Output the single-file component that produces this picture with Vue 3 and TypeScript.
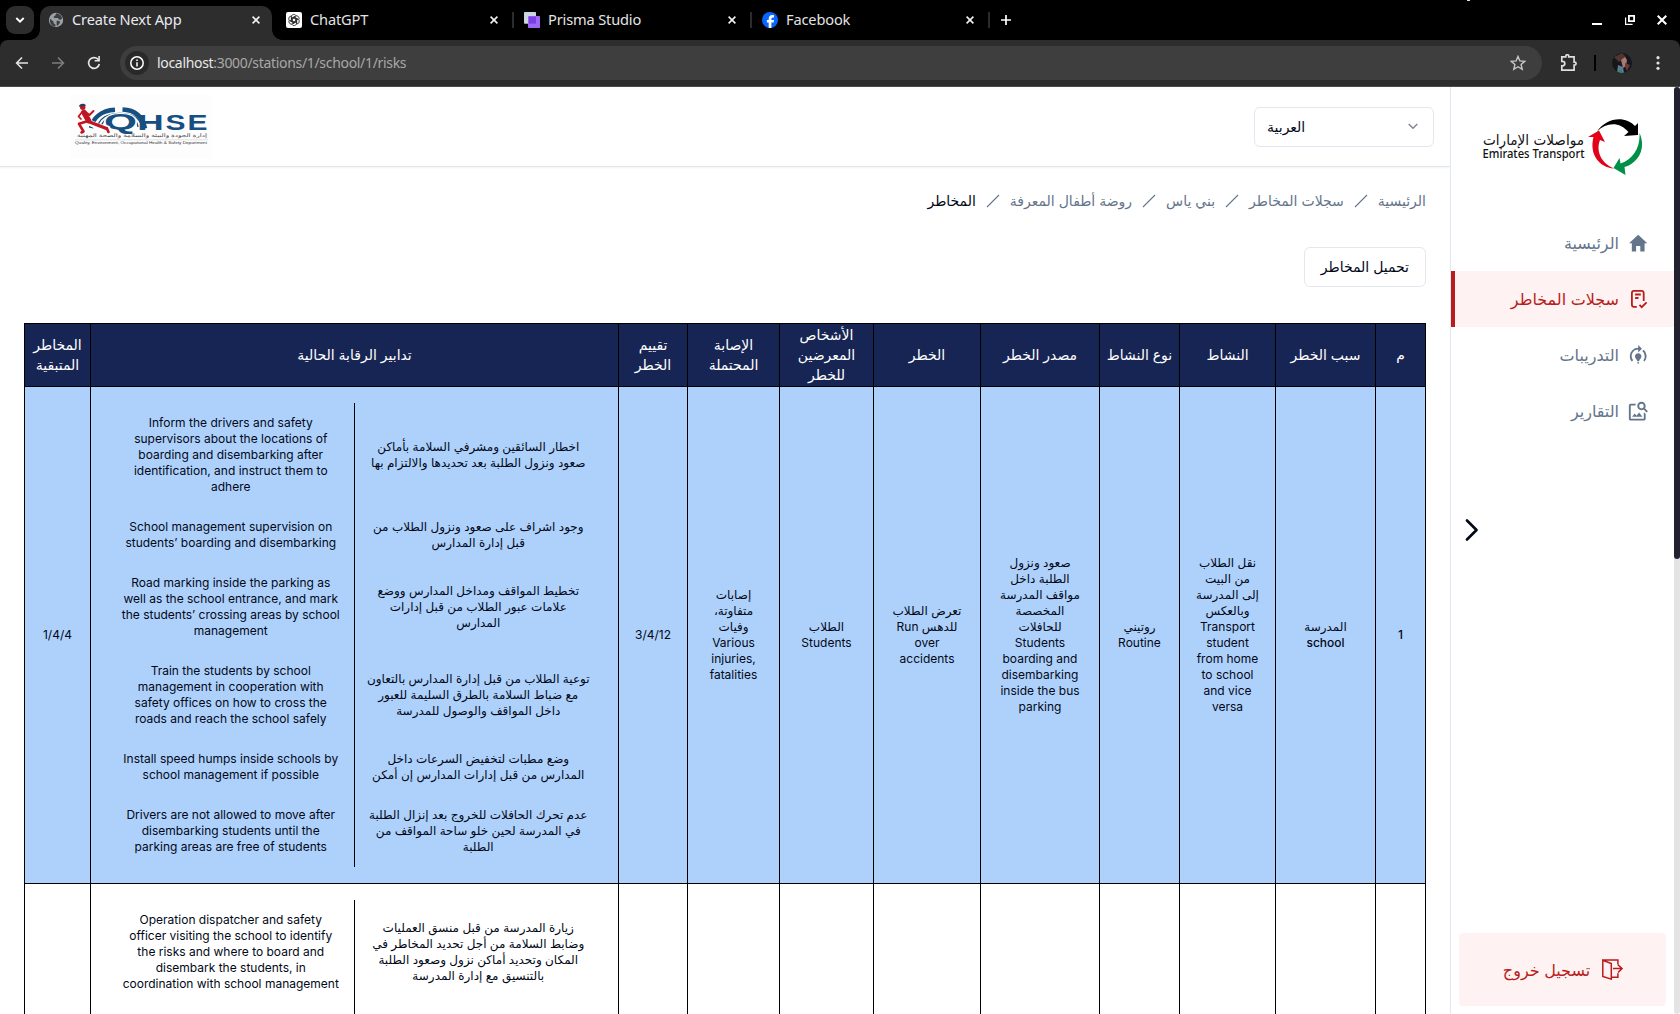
<script setup lang="ts">
interface Tab {
  title: string
  icon: 'globe' | 'gpt' | 'prisma' | 'facebook'
  active?: boolean
}

interface Column {
  label: string
  width: number
  text?: string
  strong?: boolean
}

interface Control {
  ar: string
  en: string
}

const tabs: Tab[] = [
  { title: 'Create Next App', icon: 'globe', active: true },
  { title: 'ChatGPT', icon: 'gpt' },
  { title: 'Prisma Studio', icon: 'prisma' },
  { title: 'Facebook', icon: 'facebook' },
]

const crumbs = ['الرئيسية', 'سجلات المخاطر', 'بني ياس', 'روضة أطفال المعرفة', 'المخاطر']

const navItems = [
  { label: 'الرئيسية', icon: 'home' },
  { label: 'سجلات المخاطر', icon: 'records', active: true },
  { label: 'التدريبات', icon: 'training' },
  { label: 'التقارير', icon: 'reports' },
]

const columns: Column[] = [
  { label: 'م', width: 50, text: '1', strong: true },
  { label: 'سبب الخطر', width: 100, text: 'المدرسة\nschool', strong: true },
  { label: 'النشاط', width: 96, text: 'نقل الطلاب\nمن البيت\nإلى المدرسة\nوبالعكس\nTransport\nstudent\nfrom home\nto school\nand vice\nversa' },
  { label: 'نوع النشاط', width: 80, text: 'روتيني\nRoutine' },
  { label: 'مصدر الخطر', width: 119, text: 'صعود ونزول\nالطلبة داخل\nمواقف المدرسة\nالمخصصة\nللحافلات\nStudents\nboarding and\ndisembarking\ninside the bus\nparking' },
  { label: 'الخطر', width: 107, text: 'تعرض الطلاب\nللدهس Run\nover\naccidents' },
  { label: 'الأشخاص\nالمعرضين\nللخطر', width: 94, text: 'الطلاب\nStudents' },
  { label: 'الإصابة\nالمحتملة', width: 92, text: 'إصابات\nمتفاوتة،\nوفيات\nVarious\ninjuries,\u200e\nfatalities' },
  { label: 'تقييم\nالخطر', width: 69, text: '3/4/12' },
  { label: 'تدابير الرقابة الحالية', width: 528 },
  { label: 'المخاطر\nالمتبقية', width: 66, text: '1/4/4' },
]

const controls: Control[] = [
  {
    ar: 'اخطار السائقين ومشرفي السلامة بأماكن\nصعود ونزول الطلبة بعد تحديدها والالتزام بها',
    en: 'Inform the drivers and safety\nsupervisors about the locations of\nboarding and disembarking after\nidentification, and instruct them to\nadhere',
  },
  {
    ar: 'وجود اشراف على صعود ونزول الطلاب من\nقبل إدارة المدارس',
    en: 'School management supervision on\nstudents’ boarding and disembarking',
  },
  {
    ar: 'تخطيط المواقف ومداخل المدارس ووضع\nعلامات عبور الطلاب من قبل إدارات\nالمدارس',
    en: 'Road marking inside the parking as\nwell as the school entrance, and mark\nthe students’ crossing areas by school\nmanagement',
  },
  {
    ar: 'توعية الطلاب من قبل إدارة المدارس بالتعاون\nمع ضباط السلامة بالطرق السليمة للعبور\nداخل المواقف والوصول للمدرسة',
    en: 'Train the students by school\nmanagement in cooperation with\nsafety offices on how to cross the\nroads and reach the school safely',
  },
  {
    ar: 'وضع مطبات لتخفيض السرعات داخل\nالمدارس من قبل إدارات المدارس إن أمكن',
    en: 'Install speed humps inside schools by\nschool management if possible',
  },
  {
    ar: 'عدم تحرك الحافلات للخروج بعد إنزال الطلبة\nفي المدرسة لحين خلو ساحة المواقف من\nالطلبة',
    en: 'Drivers are not allowed to move after\ndisembarking students until the\nparking areas are free of students',
  },
]

const nextControls: Control[] = [
  {
    ar: 'زيارة المدرسة من قبل منسق العمليات\nوضابط السلامة من أجل تحديد المخاطر في\nالمكان وتحديد أماكن نزول وصعود الطلبة\nبالتنسيق مع إدارة المدرسة',
    en: 'Operation dispatcher and safety\nofficer visiting the school to identify\nthe risks and where to board and\ndisembark the students, in\ncoordination with school management',
  },
]
</script>

<template>
  <div class="window">
    <header class="tabstrip">
      <button class="tab-search">
        <svg width="10" height="6" viewBox="0 0 10 6"><path d="M1.3 1l3.7 3.6L8.7 1" fill="none" stroke="#fff" stroke-width="1.9" /></svg>
      </button>
      <div v-for="tab in tabs" :key="tab.title" class="tab" :class="{ active: tab.active }">
        <svg v-if="tab.icon === 'globe'" class="favicon" width="16" height="16" viewBox="0 0 16 16">
          <circle cx="8" cy="8" r="7.200" fill="#9aa0a6" />
          <path d="M2 6.800l3.600 2.900v1.500l1.800 1.200v2.400C4 14.400 1.300 11.500 2 6.800zM8.200 1.200L7.500 3.300 5.800 4.500v1.300l1.800.2h2.200l1.300 1.600 1.300.2 1.700-1.200C14 4 11.600 1.500 8.200 1.200zM8.600 8.800h2.500l1 1.600-2.200 3H8.700z" fill="#2d2d2d" opacity=".85" />
        </svg>
        <svg v-else-if="tab.icon === 'gpt'" class="favicon" width="16" height="16" viewBox="0 0 16 16">
          <rect width="16" height="16" rx="2" fill="#fff" />
          <g fill="none" stroke="#222" stroke-width=".8">
            <path v-for="n in 6" :key="n" d="M5.300 9.600V5a2.600 2.600 0 0 1 4.900-1.200M6.300 9.900V6.300l3.300-1.900" :transform="`rotate(${n * 60} 8 8)`" />
          </g>
        </svg>
        <svg v-else-if="tab.icon === 'prisma'" class="favicon" width="16" height="16" viewBox="0 0 16 16">
          <rect width="12" height="11.700" rx=".8" fill="#cbd5e0" />
          <rect x="4" y="4" width="12" height="12" rx=".8" fill="#9f67f5" />
          <rect x="5" y="4.600" width="7" height="7" fill="#7a3fe0" />
        </svg>
        <svg v-else class="favicon" width="16" height="16" viewBox="0 0 16 16">
          <circle cx="8" cy="8" r="8" fill="#0866ff" />
          <path d="M6.700 15.900v-5.300H4.900V8h1.800V7c0-2.700 1.200-4 3.700-4 .5 0 1.200.1 1.600.2v2.200h-.9C9.800 5.400 9.400 5.900 9.400 7v1H12l-.4 2.600H9.400v5.300z" fill="#fff" />
        </svg>
        <span class="tab-title">{{ tab.title }}</span>
        <svg class="close" width="8" height="8" viewBox="0 0 8 8"><path d="M.6.600l6.800 6.800M7.400.600L.6 7.400" stroke="#f1f1f1" stroke-width="1.600" /></svg>
        <i v-if="!tab.active" class="tab-line" />
      </div>
      <svg class="plus" width="10" height="10" viewBox="0 0 10 10"><path d="M5 0v10M0 5h10" stroke="#fff" stroke-width="1.700" /></svg>
      <i class="speck" />
      <div class="window-buttons">
        <svg width="10" height="10" viewBox="0 0 10 10"><path d="M0 9h10" stroke="#fff" stroke-width="2" /></svg>
        <svg width="10" height="10" viewBox="0 0 10 10"><path d="M3.900.900h5.200v5.200H3.900z" fill="none" stroke="#fff" stroke-width="1.800" /><path d="M.6 2.500v6.900h7" fill="none" stroke="#fff" stroke-width="1.200" /></svg>
        <svg width="10" height="10" viewBox="0 0 10 10"><path d="M.7.700l8.600 8.600M9.300.700L.7 9.300" stroke="#fff" stroke-width="2" /></svg>
      </div>
    </header>

    <div class="toolbar">
      <svg class="nav-ic" width="14" height="14" viewBox="0 0 14 14"><path d="M13 7H2M7 1.500L1.600 7 7 12.500" fill="none" stroke="#e3e3e3" stroke-width="1.600" /></svg>
      <svg class="nav-ic" width="14" height="14" viewBox="0 0 14 14"><path d="M1 7h11M7 1.500L12.400 7 7 12.500" fill="none" stroke="#7d7d7d" stroke-width="1.600" /></svg>
      <svg class="nav-ic" width="14" height="14" viewBox="0 0 14 14"><path d="M12.300 8A5.400 5.400 0 1 1 11 3.300L12.200 4.700" fill="none" stroke="#e3e3e3" stroke-width="1.700" /><path d="M12.900 0v5.600H7.600V4h3.700V0z" fill="#e3e3e3" /></svg>
      <div class="omnibox">
        <span class="site-info">
          <svg width="14" height="14" viewBox="0 0 14 14"><circle cx="7" cy="7" r="6.200" fill="none" stroke="#fff" stroke-width="1.500" /><path d="M7 6.200v4.200M7 3.500v1.600" stroke="#fff" stroke-width="1.500" /></svg>
        </span>
        <span class="url"><b>localhost</b>:3000/stations/1/school/1/risks</span>
        <svg class="star" width="16" height="16" viewBox="0 0 16 16"><path d="M8 1.400l1.900 4.500 4.900.4-3.700 3.200 1.100 4.800L8 11.700l-4.200 2.600 1.100-4.800L1.200 6.300l4.900-.4z" fill="none" stroke="#c7c7c7" stroke-width="1.400" /></svg>
      </div>
      <svg class="puzzle" width="18" height="18" viewBox="0 0 18 18"><path d="M1.800 2.900h4V2.200a1.500 1.500 0 0 1 3 0v.7h5.300v5.200h.5a1.500 1.500 0 0 1 0 3h-.5v5.100H1.800v-4.300h.7a2.300 2.300 0 0 0 0-4.600h-.7z" fill="none" stroke="#dedede" stroke-width="1.700" /></svg>
      <i class="bar-line" />
      <svg class="avatar" width="20" height="20" viewBox="0 0 20 20">
        <defs><clipPath id="face"><circle cx="10" cy="10" r="10" /></clipPath></defs>
        <g clip-path="url(#face)">
          <path d="M0 0h20v20H0z" fill="#17161c" />
          <path d="M2 4l8-4 4 4-7 5z" fill="#503530" />
          <path d="M9 7l4-3 2 3-1 6-3 2z" fill="#a87a74" />
          <path d="M6 12l5 2 1 6H5z" fill="#5b7a96" />
          <path d="M13 10l5 2-3 6-2-4z" fill="#6b3a3a" />
          <path d="M7 17l3 0v3H7z" fill="#2c8a5c" />
        </g>
      </svg>
      <svg class="dots" width="4" height="14" viewBox="0 0 4 14"><g fill="#e3e3e3"><circle cx="2" cy="1.700" r="1.600" /><circle cx="2" cy="7" r="1.600" /><circle cx="2" cy="12.300" r="1.600" /></g></svg>
    </div>

    <div class="page">
      <main class="content">
        <div class="topbar">
          <svg class="qhse" width="142" height="64" viewBox="0 0 142 64">
            <path d="M0 0h142v64H0z" fill="#fdfdfd" />
            <!-- gear rings behind the letter Q -->
            <g fill="none" stroke="#174f82">
              <path d="M21 33c2-10 10-17.500 24-18.300" stroke-width="4.400" />
              <path d="M52.500 14.500c12 .5 20 7 22.500 19" stroke-width="4.600" />
              <path d="M27.500 34C28 23 38 18.300 50 18.300S70 22 72 32" stroke-width="1.300" />
              <path d="M31 34c.5-9 8-13.500 19-13.500S67 25 68 32" stroke-width="1.300" />
            </g>
            <g font-weight="700" fill="#174f82" font-size="22.500">
              <text x="34" y="34.200" textLength="33" font-size="22" lengthAdjust="spacingAndGlyphs" stroke="#fff" stroke-width="2" paint-order="stroke">Q</text>
              <text x="67.300" y="35.200" textLength="26.500" lengthAdjust="spacingAndGlyphs">H</text>
              <text x="95.500" y="35" textLength="20" lengthAdjust="spacingAndGlyphs">S</text>
              <text x="117.500" y="35.200" textLength="20" lengthAdjust="spacingAndGlyphs">E</text>
            </g>
            <!-- runner -->
            <g fill="none" stroke="#fff" stroke-linecap="round" stroke-linejoin="round">
              <path d="M14.500 18l5 9.500 8 4 10 2" stroke-width="6" />
            </g>
            <g fill="none" stroke="#c01522" stroke-linecap="round" stroke-linejoin="round">
              <path d="M14 17.500l4.500 8" stroke-width="5.500" />
              <path d="M18.500 26.500l7.500 3 10.500 4" stroke-width="3.400" />
              <path d="M37 33.500l1.500 3.500" stroke-width="2.600" />
              <path d="M16.500 26.500l-7.500 2.300 4.500 7.700-2 1" stroke-width="2.600" />
              <path d="M15 16.500l4.500 3.500 4-4" stroke-width="1.900" />
              <path d="M12 17l-3.500 4.500 2.500 2.500" stroke-width="1.700" />
            </g>
            <ellipse cx="12.700" cy="12.300" rx="2.700" ry="2.600" fill="#c01522" />
            <path d="M9 11.700c0-3.500 6-3.800 7-1z" fill="#243d65" />
            <text x="137" y="42.300" textLength="130" lengthAdjust="spacingAndGlyphs" direction="rtl" font-size="5" fill="#444">إدارة الجودة والبيئة والسلامة والصحة المهنية</text>
            <path d="M5 44.800h133" stroke="#ccc" stroke-width=".6" />
            <text x="5" y="49.200" textLength="132" lengthAdjust="spacingAndGlyphs" font-size="3.200" fill="#333">Quality, Environment, Occupational Health &amp; Safety Department</text>
          </svg>
          <div class="select">
            <span>العربية</span>
            <svg width="10" height="7" viewBox="0 0 10 7"><path d="M.7 1l4.300 4.300L9.300 1" fill="none" stroke="#808590" stroke-width="1.400" /></svg>
          </div>
        </div>

        <nav class="crumbs" dir="rtl">
          <template v-for="(crumb, i) in crumbs" :key="crumb">
            <svg v-if="i" width="14" height="14" viewBox="0 0 14 14"><path d="M1 13L13 1" stroke="#64748b" stroke-width="1.100" /></svg>
            <span :class="{ current: i === crumbs.length - 1 }">{{ crumb }}</span>
          </template>
        </nav>

        <div class="actions" dir="rtl"><button class="download">تحميل المخاطر</button></div>

        <table class="risks" dir="rtl">
          <colgroup><col v-for="c in columns" :key="c.label" :style="{ width: c.width + 'px' }" /></colgroup>
          <thead>
            <tr><th v-for="c in columns" :key="c.label">{{ c.label }}</th></tr>
          </thead>
          <tbody>
            <tr class="high">
              <td v-for="c in columns" :key="c.label" :class="{ strong: c.strong }">
                <div v-if="c.text === undefined" class="controls">
                  <div v-for="(item, i) in controls" :key="i" class="control">
                    <p>{{ item.ar }}</p>
                    <p class="en" dir="ltr">{{ item.en }}</p>
                  </div>
                </div>
                <template v-else>{{ c.text }}</template>
              </td>
            </tr>
            <tr class="next">
              <td v-for="c in columns" :key="c.label">
                <div v-if="c.text === undefined" class="controls">
                  <div v-for="(item, i) in nextControls" :key="i" class="control">
                    <p>{{ item.ar }}</p>
                    <p class="en" dir="ltr">{{ item.en }}</p>
                  </div>
                  <div class="control rest"><p /><p class="en" /></div>
                </div>
              </td>
            </tr>
          </tbody>
        </table>
      </main>

      <aside class="sidebar">
        <svg class="brand" width="162" height="58" viewBox="0 0 162 58">
          <text x="1" y="26.500" direction="ltr" textLength="101" lengthAdjust="spacingAndGlyphs" font-size="14" class="brand-ar">مواصلات الإمارات</text>
          <text x=".5" y="40" textLength="102" lengthAdjust="spacingAndGlyphs" font-size="13" class="brand-en">Emirates Transport</text>
          <path d="M115 13.500C124-.5 143-3 153 8l3-3v12l-14 1 4.500-4C138 4 125 3.500 115 13.500z" fill="#000" />
          <path d="M157.500 15c7 15-1 30-15 34l1 8-12-7 6-10 1 5.500c13-4 20-17 19-30.500z" fill="#009048" />
          <path d="M106 19l11-6.500 6 11.500-5-2c-4 10 0 22.500 14 28.500-15-1-25-14.500-20.500-31.500z" fill="#e3001b" />
        </svg>
        <nav class="menu">
          <a v-for="item in navItems" :key="item.label" class="menu-item" :class="{ active: item.active }" dir="rtl">
            <svg v-if="item.icon === 'home'" viewBox="0 0 512 512"><path d="M208 448V320h96v128h97.600V256H464L256 64 48 256h62.400v192z" fill="currentColor" /></svg>
            <svg v-else-if="item.icon === 'records'" viewBox="0 0 22.4 22.4"><path d="M9.800 18.800H7a2.100 2.100 0 0 1-2.100-2.100V4.900A2.100 2.100 0 0 1 7 2.800h7.600a2.100 2.100 0 0 1 2.100 2.100v8M8.100 6.500h5.700M8.100 10h3.400M12.500 16.900l2.200 2.300 4.900-4.900" fill="none" stroke="currentColor" stroke-width="1.800" /></svg>
            <svg v-else-if="item.icon === 'training'" viewBox="0 0 24 24"><path d="M15.500 13.500c0 2-2.500 3.500-2.500 5h-2c0-1.500-2.500-3-2.500-5 0-1.930 1.570-3.500 3.500-3.500s3.500 1.570 3.500 3.500zm-2.500 6h-2V21h2v-1.500zm6-6.500c0 1.680-.59 3.210-1.580 4.420l1.420 1.420a8.978 8.978 0 0 0-1-12.680l-1.420 1.420A6.993 6.993 0 0 1 19 13zm-3-8-4-4v3a9 9 0 0 0-9 9c0 2.230.82 4.270 2.160 5.840l1.420-1.420A6.938 6.938 0 0 1 5 13c0-3.860 3.140-7 7-7v3l4-4z" fill="currentColor" /></svg>
            <svg v-else viewBox="0 0 24 24"><path d="M18 13v7H4V6h5.020c.05-.71.22-1.380.48-2H4c-1.100 0-2 .9-2 2v14c0 1.100.9 2 2 2h14c1.100 0 2-.9 2-2v-5l-2-2zm-1.500 5h-11l2.750-3.530 1.960 2.360 2.750-3.540zm2.800-9.110c.44-.7.7-1.510.7-2.390C20 4.010 17.990 2 15.500 2S11 4.010 11 6.500s2.010 4.500 4.490 4.500c.88 0 1.700-.26 2.390-.7L21 13.420 22.420 12 19.300 8.890zM15.500 9a2.500 2.500 0 0 1 0-5 2.500 2.500 0 0 1 0 5z" fill="currentColor" /></svg>
            <span>{{ item.label }}</span>
          </a>
        </nav>
        <svg class="collapse" width="14" height="22" viewBox="0 0 14 22"><path d="M2 1.500l9.500 9.500L2 20.500" fill="none" stroke="#020817" stroke-width="2.600" stroke-linecap="round" stroke-linejoin="round" /></svg>
        <button class="logout" dir="rtl">
          <svg width="21" height="21" viewBox="0 0 21 21"><g fill="none" stroke="#b91c1c" stroke-width="1.500"><path d="M.8 1.200l8.500 3.300v15.600L.8 17.500zM.8 1h15.100v4.500M9.300 18.200h6.600v-4M11 9.600h8.800M16 5.800l4 3.800-4 3.900" /></g></svg>
          <span>تسجيل خروج</span>
        </button>
      </aside>

      <div class="scroll"><i /></div>
    </div>
  </div>
</template>

<style>
body { overflow: hidden; }
</style>

<style scoped>
* { box-sizing: border-box; }
.window {
  width: 1680px;
  height: 1014px;
  display: flex;
  flex-direction: column;
  overflow: hidden;
  background: linear-gradient(#000 60px, #fff 60px);
  color: #020817;
  font-family: Inter, "DejaVu Sans", sans-serif;
}
button { font: inherit; color: inherit; border: 0; padding: 0; }
svg { display: block; flex: none; }

/* browser chrome */
.tabstrip {
  position: relative;
  display: flex;
  height: 40px;
  flex: none;
  padding-left: 6px;
  background: #000;
  font-family: "Noto Sans", sans-serif;
}
.tab-search {
  display: flex;
  align-items: center;
  justify-content: center;
  width: 28px;
  height: 28px;
  margin: 6px 6px 0 0;
  border-radius: 9px;
  background: #2d2d2d;
}
.tab {
  position: relative;
  display: flex;
  align-items: center;
  width: 238px;
  height: 28px;
  margin-top: 6px;
  padding: 0 18px 0 14px;
  color: #e3e3e3;
  font-size: 14.600px;
  letter-spacing: -.15px;
}
.tab.active {
  width: 232px;
  height: 34px;
  padding: 0 12px 6px 8px;
  border-radius: 10px 10px 0 0;
  background: #2d2d2d;
  color: #e8eaed;
}
.tab.active::after, .tab.active::before {
  content: "";
  position: absolute;
  bottom: 0;
  width: 10px;
  height: 10px;
}
.tab.active::after { left: 100%; background: radial-gradient(circle at 100% 0, #0000 9.500px, #2d2d2d 10px); }
.tab.active::before { right: 100%; background: radial-gradient(circle at 0 0, #0000 9.500px, #2d2d2d 10px); }
.tab-title { flex: 1; margin: -2px 0 0 8px; white-space: nowrap; line-height: 20px; }
.tab-line { position: absolute; right: -4px; top: 6px; width: 2px; height: 16px; background: #2b2b2b; }
.tab:not(.active) .close { margin-right: -6px; }
.plus { margin: 15px 0 0 15px; }
.speck { position: absolute; left: 1467px; top: 0; width: 3px; height: 1px; background: #ddd; }
.window-buttons { display: flex; gap: 22.500px; margin: 15px 13px 0 auto; }

.toolbar {
  display: flex;
  align-items: center;
  height: 47px;
  flex: none;
  background: #2d2d2d;
  border-radius: 8px 8px 0 0;
  border-bottom: 1px solid #4b4b4b;
  padding: 0 16px 0 15px;
  font-family: "Noto Sans", sans-serif;
}
.nav-ic { margin-right: 22px; }
.nav-ic:nth-child(3) { margin-right: 19px; }
.omnibox {
  display: flex;
  align-items: center;
  width: 1422px;
  height: 34px;
  padding: 0 16px 0 5px;
  border-radius: 17px;
  background: #3e3e3e;
}
.site-info { display: flex; align-items: center; justify-content: center; width: 24px; height: 24px; border-radius: 50%; background: #292929; }
.url { margin: -1px 0 0 8px; color: #a8a8a8; font-size: 14px; letter-spacing: -.32px; }
.url b { color: #e8e8e8; font-weight: 400; }
.star { margin-left: auto; }
.puzzle { margin-left: 18px; }
.bar-line { width: 2px; height: 16px; margin-left: 16px; background: #000; }
.avatar { margin-left: 16px; }
.dots { margin-left: 24px; }

/* page */
.page { display: flex; flex: 1; min-height: 0; background: #fff; }
.content { width: 1450px; overflow: hidden; }
.topbar {
  display: flex;
  justify-content: space-between;
  align-items: center;
  height: 80px;
  padding: 0 16px 0 70px;
  border-bottom: 1px solid #e2e8f0;
  box-shadow: 0 1px 2px rgba(0, 0, 0, .05);
}
.qhse { font-family: "Liberation Sans", "DejaVu Sans", sans-serif; }
.select {
  display: flex;
  align-items: center;
  justify-content: space-between;
  width: 180px;
  height: 40px;
  padding: 0 15px 0 12px;
  border: 1px solid #e2e8f0;
  border-radius: 6px;
  font-size: 14px;
}
.crumbs {
  display: flex;
  align-items: center;
  gap: 10px;
  height: 20px;
  margin: 24px 24px 0;
  color: #64748b;
  font-size: 14px;
  line-height: 20px;
}
.current { color: #020817; }
.actions { display: flex; padding: 36px 24px 0; }
.download { height: 40px; padding: 0 16px 1px; border: 1px solid #e2e8f0; border-radius: 6px; background: #fff; font-size: 14px; }
.risks {
  width: 1402px;
  margin: 36px 24px 0;
  table-layout: fixed;
  border-collapse: collapse;
}
th, td { padding: 0; border: 1px solid #000; text-align: center; vertical-align: middle; white-space: pre; }
th { height: 63px; background: #172554; color: #fff; font-size: 14px; font-weight: 400; line-height: 20px; }
td { font-size: 12px; line-height: 16px; }
.high td { height: 497px; background: #aed1fc; }
.next td { height: 497px; vertical-align: top; }
.strong { font-weight: 500; }
.controls { padding: 16px; }
.control { display: flex; }
.control p { display: flex; align-items: center; justify-content: center; width: 50%; margin: 0; padding: 12px 0; }
.control .en { border-right: 1px solid #000; padding-left: 1px; }
.rest { height: 340px; }

.sidebar {
  display: flex;
  flex-direction: column;
  width: 224px;
  border-left: 1px solid #e2e8f0;
}
.brand { margin: 31px 0 0 31px; }
.brand-ar { font-family: "DejaVu Sans", sans-serif; fill: #111; }
.brand-en { font-family: "Noto Sans", sans-serif; font-weight: 500; fill: #111; }
.menu { margin-top: 39px; }
.menu-item {
  display: flex;
  align-items: center;
  gap: 8px;
  height: 56px;
  padding-right: 24.600px;
  color: #64748b;
  font-size: 16px;
}
.menu-item svg { width: 22.400px; height: 22.400px; }
.menu-item.active { border-left: 4px solid #b91c1c; background: #fef3f2; color: #b91c1c; }
.collapse { margin: 80px 0 0 14px; }
.logout {
  display: flex;
  align-items: center;
  justify-content: center;
  gap: 12px;
  width: 207px;
  height: 73px;
  margin: auto 0 8px 8px;
  padding-left: 1px;
  border-radius: 4px;
  background: #fef3f2;
  color: #b91c1c;
  font-size: 16px;
}
.scroll { width: 6px; border-radius: 3px; background: #e4e4e4; }
.scroll i { display: block; height: 472px; border-radius: 3px; background: #232130; }
</style>
